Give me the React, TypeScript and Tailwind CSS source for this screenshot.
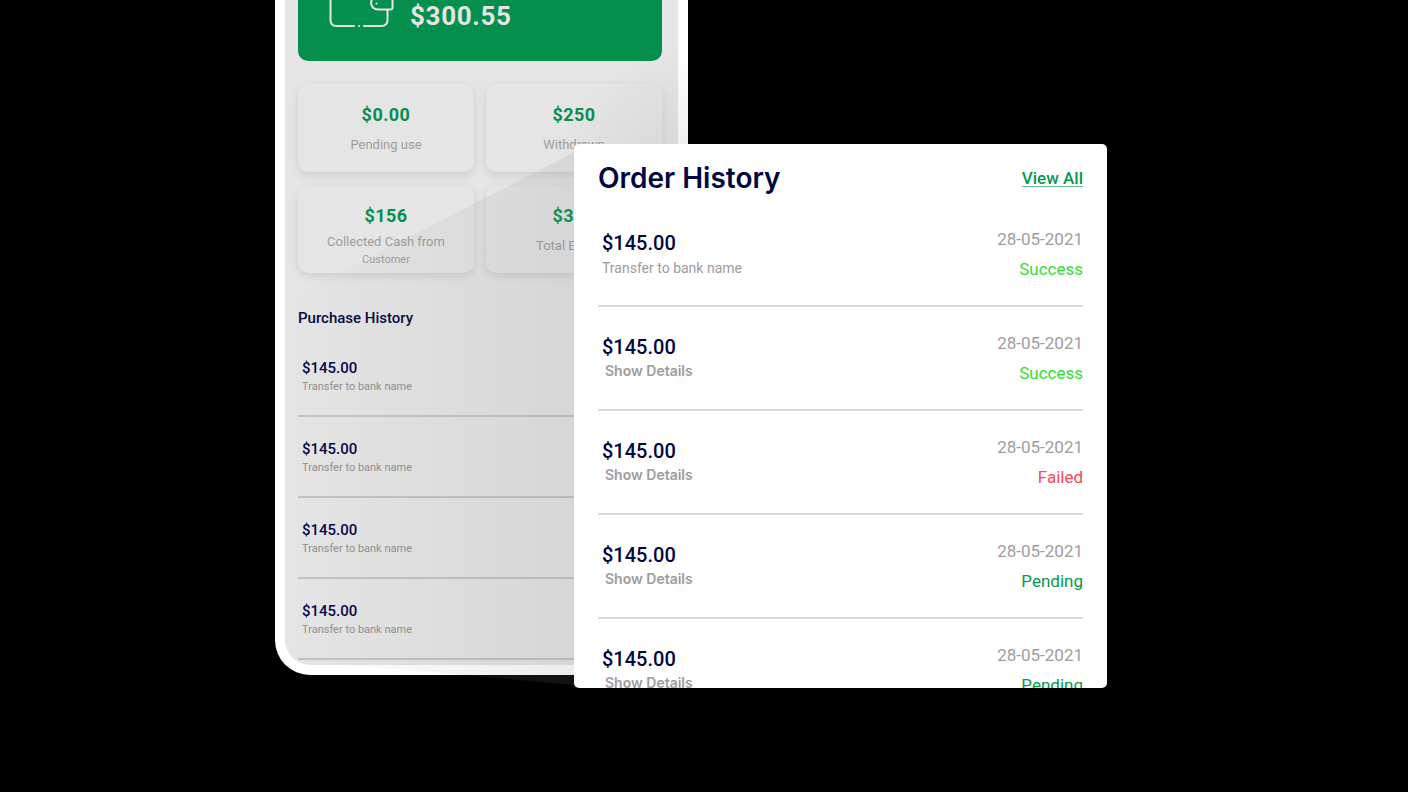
const balances = [
  { amount: "$0.00", label: "Pending use" },
  { amount: "$250", label: "Withdrawn" },
  { amount: "$156", label: "Collected Cash from", note: "Customer" },
  { amount: "$350", label: "Total Earning" },
];

const purchases = [1, 2, 3, 4];

type Order = { id: number; status: "Success" | "Failed" | "Pending"; transfer?: boolean };

const orders: Order[] = [
  { id: 1, status: "Success", transfer: true },
  { id: 2, status: "Success" },
  { id: 3, status: "Failed" },
  { id: 4, status: "Pending" },
  { id: 5, status: "Pending" },
];

const statusColor = {
  Success: "text-[#36dc36]",
  Failed: "text-[#f74a5a]",
  Pending: "text-[#06994f]",
};

function WalletIcon() {
  return (
    <svg className="shrink-0" width="66" height="60" viewBox="0 0 66 60" fill="none" stroke="#e5e5e5" strokeWidth="2" strokeLinecap="round" aria-hidden="true">
      <path d="M26 58H8.500Q2.500 58 2.500 52V8Q2.500 2 8.500 2H53Q59.500 2 59.500 8V24" />
      <path d="M36 58H53Q59.500 58 59.500 52V42" />
      <path d="M31 58h.1" />
      <path d="M64.500 28V39.500Q64.500 41.500 62.500 41.500H50Q46 41.500 44.200 38.500Q42 35 44 31.500Q46 28 50 28H64.500" />
      <path d="M48.500 35.500h.1" />
    </svg>
  );
}

function Phone() {
  return (
    <section className="relative w-[413px] shrink-0 overflow-hidden rounded-b-[35px] border-x-10 border-b-10 border-white bg-[#e5e5e5] pr-4 pb-[5px] pl-[13px]">
      <div className="flex h-[61px] items-end gap-4 rounded-b-[10px] bg-[#048f4d] pb-[33px] pl-[30px]">
        <WalletIcon />
        <p className="-mb-1 text-[26px] leading-8 font-bold tracking-wide text-[#e5e5e5]">$300.55</p>
      </div>
      <ul className="mt-[23px] grid grid-cols-2 gap-x-3 gap-y-[13px]">
        {balances.map((b) => (
          <li key={b.amount} className="flex h-[88px] flex-col items-center rounded-[10px] bg-[#e5e5e5] pt-[19px] text-center text-[#9d9d9d] shadow-[0_3px_8px_rgba(0,0,0,0.1)]">
            <p className="text-lg leading-6 font-bold tracking-wide text-[#048f4d]">{b.amount}</p>
            <p className={b.note ? "mt-1 text-[13px] leading-5" : "mt-2 text-[13px] leading-5"}>{b.label}</p>
            {b.note && <p className="text-[11px] leading-4">{b.note}</p>}
          </li>
        ))}
      </ul>
      <h2 className="mt-[35px] text-[15px] leading-5 font-medium text-[#020544]">Purchase History</h2>
      <ul className="mt-2">
        {purchases.map((id) => (
          <li key={id} className="h-[81px] border-b-2 border-[#c2c2c2] pt-[22px] pl-1">
            <p className="text-[15px] leading-5 font-medium text-[#020544]">$145.00</p>
            <p className="mt-[1px] text-[11px] leading-4 text-[#8f8f8f]">Transfer to bank name</p>
          </li>
        ))}
      </ul>
    </section>
  );
}

function LightBeam() {
  return (
    <svg className="pointer-events-none absolute top-0 left-0" width="413" height="700" viewBox="0 0 413 700" aria-hidden="true">
      <defs>
        <linearGradient id="beam" gradientUnits="userSpaceOnUse" x1="10" y1="0" x2="300" y2="0">
          <stop offset="0" stopColor="#828282" stopOpacity="0" />
          <stop offset="1" stopColor="#828282" stopOpacity="0.15" />
        </linearGradient>
        <radialGradient id="glow" gradientUnits="userSpaceOnUse" cx="413" cy="190" r="140">
          <stop offset="0" stopColor="#828282" stopOpacity="0.18" />
          <stop offset="1" stopColor="#828282" stopOpacity="0" />
        </radialGradient>
      </defs>
      <path d="M10 300L300 152V685L10 659Z" fill="url(#beam)" />
      <path d="M270 40H413V160H270Z" fill="url(#glow)" />
    </svg>
  );
}

function OrderHistory() {
  return (
    <section className="relative -ml-[114px] mt-36 h-[544px] min-w-0 flex-1 overflow-hidden rounded-[5px] bg-white px-6 pt-[14px]">
      <header className="flex items-center justify-between">
        <h1 className="font-[Inter,sans-serif] text-[28px] leading-10 font-semibold text-[#020544]">Order History</h1>
        <a href="#orders" className="text-[17px] leading-5 font-medium text-[#06994f] underline decoration-[#6cc49a] underline-offset-2">View All</a>
      </header>
      <ul id="orders" className="mt-[5px]">
        {orders.map((o) => (
          <li key={o.id} className="flex h-[104px] items-start justify-between border-b-2 border-[#dadada] pl-1">
            <div className="pt-7">
              <p className="text-xl leading-6 font-medium text-[#020544]">$145.00</p>
              {o.transfer ? (
                <p className="mt-[3px] text-sm leading-5 text-[#9d9d9d]">Transfer to bank name</p>
              ) : (
                <button type="button" className="mt-[2px] ml-[3px] block font-[Inter,sans-serif] text-sm leading-5 font-semibold text-[#9d9d9d]">Show Details</button>
              )}
            </div>
            <div className="pt-[26px] text-right text-[17px] leading-5">
              <p className="text-[#9d9d9d]">28-05-2021</p>
              <p className={`mt-[10px] ${statusColor[o.status]}`}>{o.status}</p>
            </div>
          </li>
        ))}
      </ul>
    </section>
  );
}

export default function App() {
  return (
    <div className="min-h-screen overflow-hidden bg-black font-[Roboto,sans-serif]">
      <main className="relative mx-auto flex w-full max-w-[858px] items-start pr-[26px]">
        <Phone />
        <LightBeam />
        <OrderHistory />
      </main>
    </div>
  );
}
